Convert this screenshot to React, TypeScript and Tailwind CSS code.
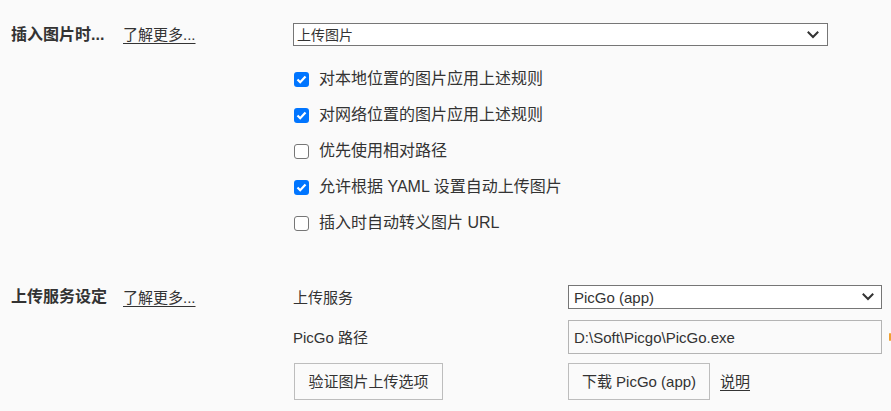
import React from "react";

const Chevron = () => (
  <svg width="12" height="8" viewBox="0 0 12 8" fill="none">
    <path d="M1.5 1.5 L6 6 L10.5 1.5" stroke="#333" strokeWidth="2" strokeLinecap="square" />
  </svg>
);

const Box = ({ checked }: { checked: boolean }) =>
  checked ? (
    <div className="w-[15px] h-[15px] rounded-[3px] bg-[#0075ff] flex items-center justify-center shrink-0">
      <svg width="11" height="9" viewBox="0 0 11 9" fill="none">
        <path d="M1.5 4.5 L4.2 7.2 L9.5 1.5" stroke="#fff" strokeWidth="2.2" />
      </svg>
    </div>
  ) : (
    <div className="w-[15px] h-[15px] rounded-[3px] border-[1.5px] border-[#767676] bg-white shrink-0" />
  );

const rows: [boolean, string][] = [
  [true, "对本地位置的图片应用上述规则"],
  [true, "对网络位置的图片应用上述规则"],
  [false, "优先使用相对路径"],
  [true, "允许根据 YAML 设置自动上传图片"],
  [false, "插入时自动转义图片 URL"],
];

export default function App() {
  return (
    <div className="w-[891px] h-[411px] bg-[#fafafa] overflow-hidden relative text-[#333] font-['Liberation_Sans','Noto_Sans_CJK_SC',sans-serif]">
      {/* Section 1 */}
      <div className="flex pt-[23px]">
        <div className="w-[293px] pl-[11px] flex items-center h-[23px] shrink-0">
          <span className="text-[16px] font-bold leading-none w-[112px]">插入图片时...</span>
          <span className="text-[15px] underline underline-offset-[3px] leading-none">了解更多...</span>
        </div>
        <div className="flex flex-col">
          <div className="w-[535px] h-[23px] border border-[#767676] bg-white flex items-center justify-between pl-[3px] pr-[8px]">
            <span className="text-[14px] leading-none">上传图片</span>
            <Chevron />
          </div>
          <div className="mt-[15px] flex flex-col">
            {rows.map(([c, t], i) => (
              <div key={i} className="h-[36px] flex items-center">
                <div className="ml-[1px] mr-[10px]">
                  <Box checked={c} />
                </div>
                <span className="text-[16px] leading-none">{t}</span>
              </div>
            ))}
          </div>
        </div>
      </div>

      {/* Section 2 */}
      <div className="flex mt-[44px]">
        <div className="w-[293px] pl-[11px] flex items-center h-[24px] shrink-0">
          <span className="text-[16px] font-bold leading-none w-[112px]">上传服务设定</span>
          <span className="text-[15px] underline underline-offset-[3px] leading-none">了解更多...</span>
        </div>
        <div className="flex flex-col text-[15px]">
          <div className="flex items-center h-[24px]">
            <span className="w-[275px] leading-none">上传服务</span>
            <div className="w-[314px] h-[24px] border border-[#767676] bg-white flex items-center justify-between pl-[5px] pr-[7px]">
              <span className="leading-none">PicGo (app)</span>
              <Chevron />
            </div>
          </div>
          <div className="flex items-center h-[34px] mt-[11px]">
            <span className="w-[275px] leading-none">PicGo 路径</span>
            <div className="w-[314px] h-[34px] border border-[#b4b4b4] bg-[#fafafa] flex items-center pl-[5px]">
              <span className="leading-none">D:\Soft\Picgo\PicGo.exe</span>
            </div>
            <div className="ml-[7px] w-[2px] h-[8px] bg-[#f0a030] rounded-sm" />
          </div>
          <div className="flex items-center h-[37px] mt-[9px]">
            <div className="w-[275px]">
              <div className="ml-[1px] w-[149px] h-[37px] border border-[#bdbdbd] flex items-center justify-center">
                <span className="leading-none">验证图片上传选项</span>
              </div>
            </div>
            <div className="w-[142px] h-[37px] border border-[#bdbdbd] flex items-center justify-center">
              <span className="leading-none">下载 PicGo (app)</span>
            </div>
            <span className="ml-[10px] underline underline-offset-[3px] leading-none">说明</span>
          </div>
        </div>
      </div>
    </div>
  );
}
